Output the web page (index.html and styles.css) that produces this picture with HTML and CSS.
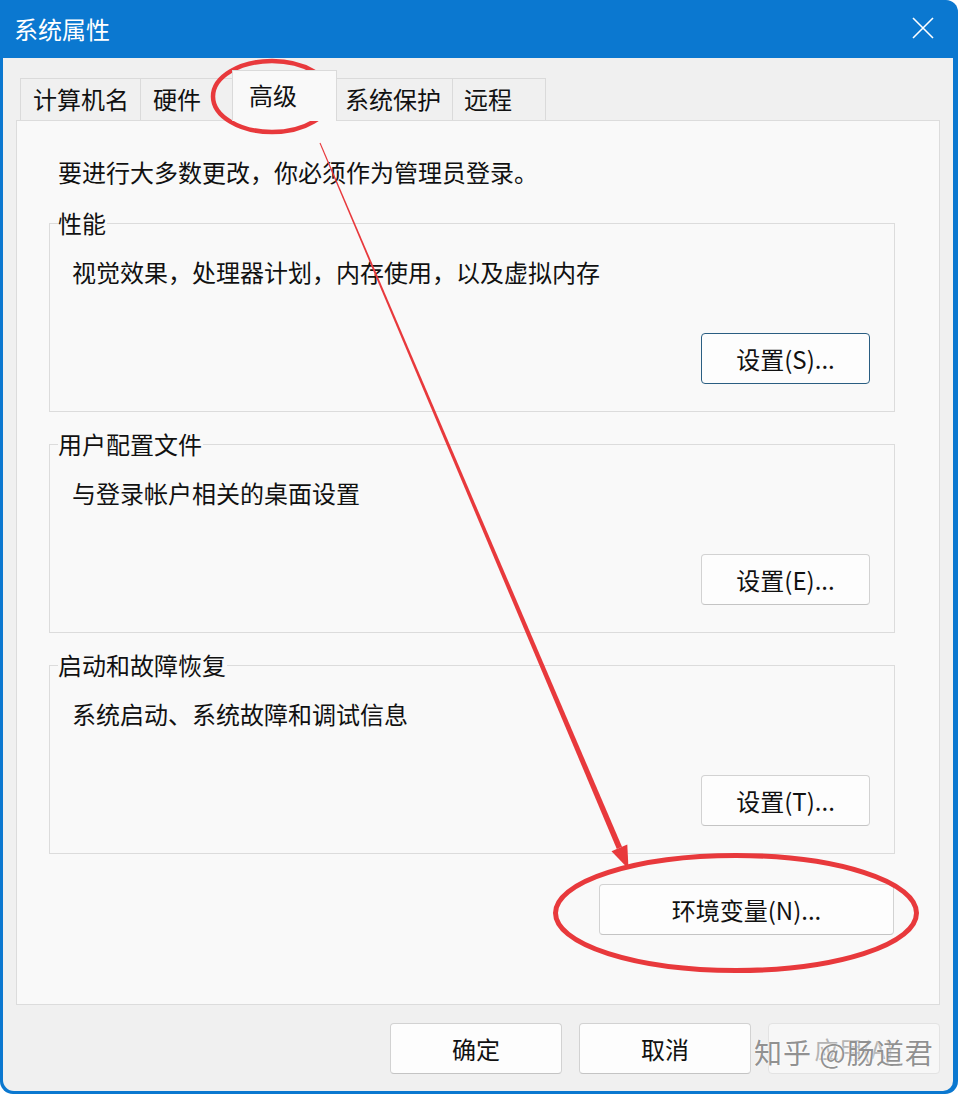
FILE: index.html
```html
<!DOCTYPE html>
<html lang="zh-CN">
<head>
<meta charset="utf-8">
<title>系统属性</title>
<link rel="stylesheet" href="styles.css">
</head>
<body>
<div class="window">
  <div class="titlebar">
    <span class="title">系统属性</span>
    <svg class="close" width="22" height="22" viewBox="0 0 22 22" aria-label="关闭">
      <path d="M1 1 L21 21 M21 1 L1 21" stroke="#ffffff" stroke-width="1.6" fill="none"/>
    </svg>
  </div>
  <div class="body">
    <div class="tabs">
      <div class="tab tab-name">计算机名</div>
      <div class="tab tab-hw">硬件</div>
      <div class="tab tab-active">高级</div>
      <div class="tab tab-protect">系统保护</div>
      <div class="tab tab-remote">远程</div>
    </div>
    <div class="panel">
      <p class="intro">要进行大多数更改，你必须作为管理员登录。</p>
      <fieldset class="group">
        <legend>性能</legend>
        <p class="desc">视觉效果，处理器计划，内存使用，以及虚拟内存</p>
        <div class="group-actions"><button class="btn btn-default">设置(S)...</button></div>
      </fieldset>
      <fieldset class="group">
        <legend>用户配置文件</legend>
        <p class="desc">与登录帐户相关的桌面设置</p>
        <div class="group-actions"><button class="btn">设置(E)...</button></div>
      </fieldset>
      <fieldset class="group">
        <legend>启动和故障恢复</legend>
        <p class="desc">系统启动、系统故障和调试信息</p>
        <div class="group-actions"><button class="btn">设置(T)...</button></div>
      </fieldset>
      <div class="env-row"><button class="btn btn-wide">环境变量(N)...</button></div>
    </div>
    <div class="footer">
      <button class="btn btn-footer">确定</button>
      <button class="btn btn-footer">取消</button>
      <button class="btn btn-footer btn-disabled" disabled>应用(A)</button>
    </div>
  </div>
  <svg class="annotations" width="958" height="1094" viewBox="0 0 958 1094">
    <ellipse cx="272" cy="96.5" rx="59" ry="35.5" fill="none" stroke="#e8393c" stroke-width="4.5"/>
    <polygon points="319.5,143.2 320.5,142.8 622,846.7 616.8,848.9" fill="#e8393c"/>
    <polygon points="611.5,851.2 627.3,844.5 628.5,869" fill="#e8393c"/>
    <ellipse cx="736" cy="913" rx="180.5" ry="57.5" fill="none" stroke="#e8393c" stroke-width="5"/>
  </svg>
  <div class="watermark">知乎 @肠道君</div>
</div>
</body>
</html>
```
FILE: styles.css
```css
* { box-sizing: border-box; }
html, body { margin: 0; padding: 0; background: #ffffff; }
body {
  font-family: "Noto Sans CJK SC", "Microsoft YaHei", sans-serif;
  color: #111111;
}
.window {
  position: relative;
  width: 958px;
  height: 1094px;
  background: #0b78d0;
  border-radius: 0 12px 13px 13px;
  display: flex;
  flex-direction: column;
  overflow: hidden;
}
.titlebar {
  height: 58px;
  flex: none;
  display: flex;
  align-items: center;
  justify-content: space-between;
  padding: 0 24px 0 14px;
}
.title {
  color: #ffffff;
  font-size: 24px;
  line-height: 32px;
  margin-top: -1px;
}
.close { display: block; margin-top: -2px; }
.body {
  flex: 1;
  margin: 0 5px 3px 3px;
  background: #f0f0f0;
  border-radius: 0 0 10px 11px;
  display: flex;
  flex-direction: column;
}
.tabs {
  display: flex;
  align-items: flex-end;
  padding: 12px 0 0 17px;
  height: 62px;
}
.tab {
  height: 42px;
  border: 1px solid #dadada;
  border-bottom: none;
  margin-left: -1px;
  background: #f0f0f0;
  font-size: 24px;
  line-height: 40px;
  padding-left: 12px;
  white-space: nowrap;
  color: #111111;
}
.tab-name { width: 121px; margin-left: 0; }
.tab-hw { width: 93px; padding-left: 12px; }
.tab-active {
  width: 105px;
  height: 51px;
  line-height: 48px;
  padding-left: 16px;
  background: #f9f9f9;
  margin-bottom: -1px;
  position: relative;
  z-index: 1;
}
.tab-protect { width: 117px; padding-left: 8px; }
.tab-remote { width: 94px; padding-left: 11px; }
.panel {
  height: 885px;
  margin: 0 13px;
  border: 1px solid #dcdcdc;
  background: #f9f9f9;
  padding: 35px 44px 0 32px;
  display: flex;
  flex-direction: column;
}
.intro {
  margin: 0 0 0 9px;
  font-size: 24px;
  line-height: 32px;
}
.group {
  margin: 19px 0 0 0;
  border: 1px solid #dcdcdc;
  padding: 17px 24px 27px 8px;
  min-width: 0;
}
.group + .group { margin-top: 16px; }
.group legend {
  padding: 0 1px 0 0;
  font-size: 24px;
  line-height: 32px;
}
.desc {
  margin: 0 0 0 14px;
  font-size: 24px;
  line-height: 32px;
}
.group-actions {
  display: flex;
  justify-content: flex-end;
  margin-top: 45px;
}
.btn {
  font-family: "Noto Sans CJK SC", "Microsoft YaHei", sans-serif;
  font-size: 24px;
  line-height: 32px;
  color: #111111;
  background: #fdfdfd;
  border: 1px solid #d2d2d2;
  border-bottom-color: #c4c4c4;
  border-radius: 4px;
  height: 51px;
  width: 169px;
  padding: 0;
  margin: 0;
}
.btn-default { border-color: #2a5e82; }
.env-row {
  display: flex;
  justify-content: flex-end;
  margin-top: 30px;
  padding-right: 1px;
}
.btn-wide { width: 295px; }
.footer {
  display: flex;
  justify-content: flex-end;
  gap: 17px;
  padding: 18px 13px 0 0;
}
.btn-footer { width: 172px; }
.btn-disabled {
  color: #b4b4b4;
  background: #f7f7f7;
  border-color: #e3e3e3;
}
.annotations {
  position: absolute;
  left: 0;
  top: 0;
  pointer-events: none;
}
.watermark {
  position: absolute;
  left: 754px;
  top: 1034px;
  font-size: 28px;
  line-height: 36px;
  color: rgba(125, 125, 125, 0.85);
  text-shadow: 0 0 2px #ffffff, 0 0 1px #ffffff;
  white-space: nowrap;
  letter-spacing: 1px;
}
```
